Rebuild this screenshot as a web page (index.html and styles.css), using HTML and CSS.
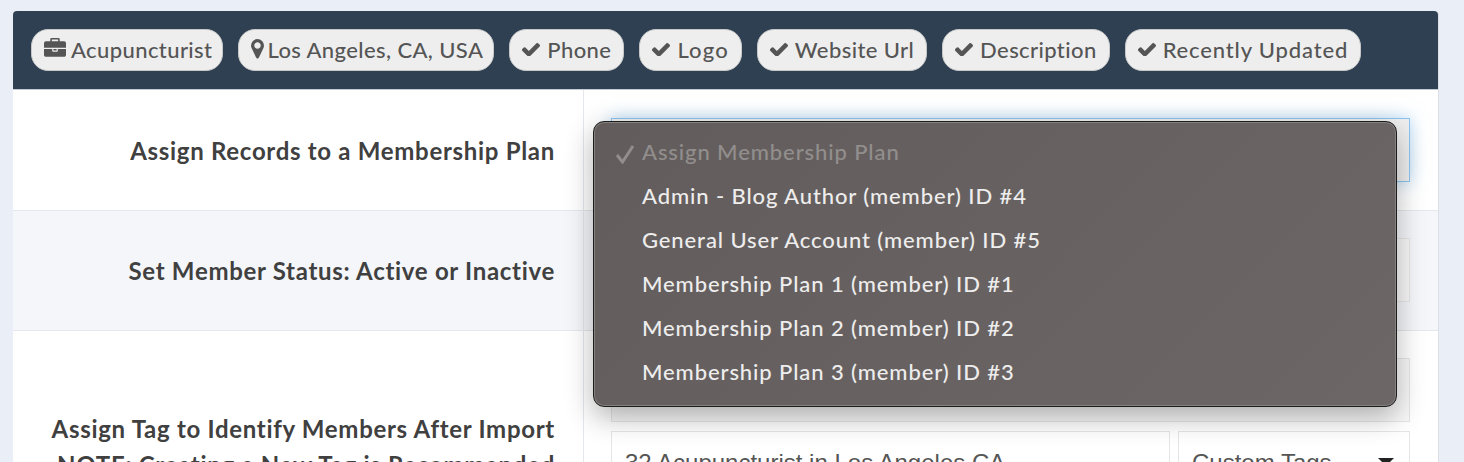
FILE: index.html
```html
<!DOCTYPE html>
<html lang="en">
<head>
    <meta charset="UTF-8">
    <title>Import Members</title>
    <link rel="stylesheet" href="styles.css">
</head>
<body>
    <div class="card">
        <div class="filters">
            <span class="chip chip-tight">
                <svg class="icon icon-case" viewBox="0 0 1792 1792"><path d="M640 256h512v-128h-512v128zm1152 640v480q0 66-47 113t-113 47h-1472q-66 0-113-47t-47-113v-480h672v160q0 26 19 45t45 19h320q26 0 45-19t19-45v-160h672zm-768 0v128h-256v-128h256zm768-480v384h-1792v-384q0-66 47-113t113-47h352v-160q0-40 28-68t68-28h576q40 0 68 28t28 68v160h352q66 0 113 47t47 113z"/></svg>
                Acupuncturist
            </span>
            <span class="chip chip-tight">
                <svg class="icon icon-pin" viewBox="0 0 1024 1664"><path d="M768 512q0-106-75-181t-181-75-181 75-75 181 75 181 181 75 181-75 75-181zm256 0q0 109-33 179l-364 774q-16 33-47.500 52t-67.500 19-67.500-19-46.500-52l-365-774q-33-70-33-179 0-212 150-362t362-150 362 150 150 362z"/></svg>
                Los Angeles, CA, USA
            </span>
            <span class="chip"><svg class="icon icon-check" viewBox="130 280 1541 1150"><path d="M1671 566q0 40-28 68l-724 724-136 136q-28 28-68 28t-68-28l-136-136-362-362q-28-28-28-68t28-68l136-136q28-28 68-28t68 28l294 295 656-657q28-28 68-28t68 28l136 136q28 28 28 68z"/></svg> Phone</span>
            <span class="chip chip-logo"><svg class="icon icon-check" viewBox="130 280 1541 1150"><path d="M1671 566q0 40-28 68l-724 724-136 136q-28 28-68 28t-68-28l-136-136-362-362q-28-28-28-68t28-68l136-136q28-28 68-28t68 28l294 295 656-657q28-28 68-28t68 28l136 136q28 28 28 68z"/></svg> Logo</span>
            <span class="chip"><svg class="icon icon-check" viewBox="130 280 1541 1150"><path d="M1671 566q0 40-28 68l-724 724-136 136q-28 28-68 28t-68-28l-136-136-362-362q-28-28-28-68t28-68l136-136q28-28 68-28t68 28l294 295 656-657q28-28 68-28t68 28l136 136q28 28 28 68z"/></svg> Website Url</span>
            <span class="chip"><svg class="icon icon-check" viewBox="130 280 1541 1150"><path d="M1671 566q0 40-28 68l-724 724-136 136q-28 28-68 28t-68-28l-136-136-362-362q-28-28-28-68t28-68l136-136q28-28 68-28t68 28l294 295 656-657q28-28 68-28t68 28l136 136q28 28 28 68z"/></svg> Description</span>
            <span class="chip chip-wide"><svg class="icon icon-check" viewBox="130 280 1541 1150"><path d="M1671 566q0 40-28 68l-724 724-136 136q-28 28-68 28t-68-28l-136-136-362-362q-28-28-28-68t28-68l136-136q28-28 68-28t68 28l294 295 656-657q28-28 68-28t68 28l136 136q28 28 28 68z"/></svg> Recently Updated</span>
        </div>

        <div class="row row-first">
            <div class="label">Assign Records to a Membership Plan</div>
            <div class="field">
                <div class="input focused"></div>
            </div>
        </div>

        <div class="row row-alt">
            <div class="label">Set Member Status: Active or Inactive</div>
            <div class="field">
                <div class="input"></div>
            </div>
        </div>

        <div class="row row-tags">
            <div class="label">Assign Tag to Identify Members After Import<br>NOTE: Creating a New Tag is Recommended</div>
            <div class="field">
                <div class="input"></div>
                <div class="tag-line">
                    <div class="input input-plain">32 Acupuncturist in Los Angeles CA</div>
                    <div class="input input-plain select">Custom Tags<span class="caret"></span></div>
                </div>
            </div>
        </div>

        <div class="menu">
            <div class="menu-item disabled">
                <svg class="tick" viewBox="0 0 20 20"><path d="M2 11l5.500 7L18 2"/></svg>
                Assign Membership Plan
            </div>
            <div class="menu-item">Admin - Blog Author (member) ID #4</div>
            <div class="menu-item">General User Account (member) ID #5</div>
            <div class="menu-item">Membership Plan 1 (member) ID #1</div>
            <div class="menu-item">Membership Plan 2 (member) ID #2</div>
            <div class="menu-item">Membership Plan 3 (member) ID #3</div>
        </div>
    </div>
</body>
</html>
```

FILE: styles.css
```css
html, body {
    height: 100%;
    overflow: hidden;
}

body {
    margin: 0;
    padding: 11px 25px 0 13px;
    background-color: #e9eef7;
    font-family: "Lato", "Liberation Sans", sans-serif;
    box-sizing: border-box;
}

.card {
    position: relative;
    background-color: #fff;
    border-right: 1px solid #dcdfe4;
    border-radius: 4px 4px 0 0;
}

.filters {
    display: flex;
    gap: 15px;
    height: 79px;
    box-sizing: border-box;
    padding: 18px;
    background-color: #2e4052;
    border-bottom: 1px solid #c5cbd2;
    border-radius: 4px 4px 0 0;
}

.chip {
    display: flex;
    align-items: center;
    gap: 5px;
    height: 42px;
    box-sizing: border-box;
    padding: 0 12px 2px;
    background-color: #eee;
    border: 1px solid #c8c8c8;
    border-radius: 17px;
    color: #555;
    font-size: 22px;
    letter-spacing: 0.4px;
    font-weight: 500;
    white-space: nowrap;
}

.chip-tight {
    padding-right: 10px;
}

.chip-logo {
    letter-spacing: 1.15px;
}

.chip-wide {
    letter-spacing: 0.85px;
}

.icon {
    fill: #555;
    flex: none;
}

.icon-case {
    width: 22px;
    height: 22px;
}

.icon-pin {
    width: 13px;
    height: 21px;
    margin-right: -2px;
}

.icon-check {
    width: 18px;
    height: 14px;
    margin-right: 2px;
}

.row {
    display: grid;
    grid-template-columns: 570px 1fr;
    border-bottom: 1px solid #e4e7eb;
}

.row-alt {
    background-color: #f4f6fa;
}

.row-tags {
    border-bottom: 0;
    min-height: 230px;
}

.label {
    align-self: center;
    padding: 1px 28px 0 0;
    text-align: right;
    color: #404040;
    font-size: 24px;
    font-weight: 700;
    line-height: 36px;
    letter-spacing: 0.7px;
}

.field {
    display: flex;
    flex-direction: column;
    gap: 9px;
    padding: 27px 28px 28px 27px;
    border-left: 1px solid #e4e7eb;
}

.row-first .field {
    padding-top: 28px;
}

.input {
    height: 64px;
    box-sizing: border-box;
    background-color: #f8f8f8;
    border: 1px solid #e6e6e6;
}

.focused {
    background-color: #efefef;
    border-color: #8cc5f2;
    box-shadow: 0 0 16px rgba(102, 175, 233, 0.5);
}

.tag-line {
    display: flex;
    gap: 8px;
}

.input-plain {
    flex: 1;
    display: flex;
    align-items: center;
    padding: 0 13px;
    background-color: #fff;
    color: #555;
    font-family: "Liberation Sans", sans-serif;
    font-size: 24px;
    white-space: nowrap;
}

.select {
    flex: none;
    width: 232px;
    justify-content: space-between;
}

.caret {
    width: 0;
    height: 0;
    margin: -3px 2px 0 0;
    border-left: 8px solid transparent;
    border-right: 8px solid transparent;
    border-top: 8px solid #222;
}

.menu {
    position: absolute;
    top: 110px;
    left: 580px;
    width: 804px;
    height: 286px;
    box-sizing: border-box;
    padding: 8px 0;
    background: linear-gradient(135deg, #625d5c, #6c6766);
    border: 1px solid #1c1c1c;
    border-radius: 11px;
    box-shadow: inset 0 0 0 1px #85817f, 0 10px 28px rgba(0, 0, 0, 0.3);
}

.menu-item {
    position: relative;
    height: 44px;
    padding-left: 48px;
    color: #eeeded;
    font-size: 22px;
    font-weight: 500;
    line-height: 44px;
    letter-spacing: 0.9px;
    white-space: nowrap;
}

.disabled {
    color: #928e8d;
}

.tick {
    position: absolute;
    left: 21px;
    top: 14px;
    width: 20px;
    height: 20px;
    fill: none;
    stroke: #928e8d;
    stroke-width: 3;
}
```
